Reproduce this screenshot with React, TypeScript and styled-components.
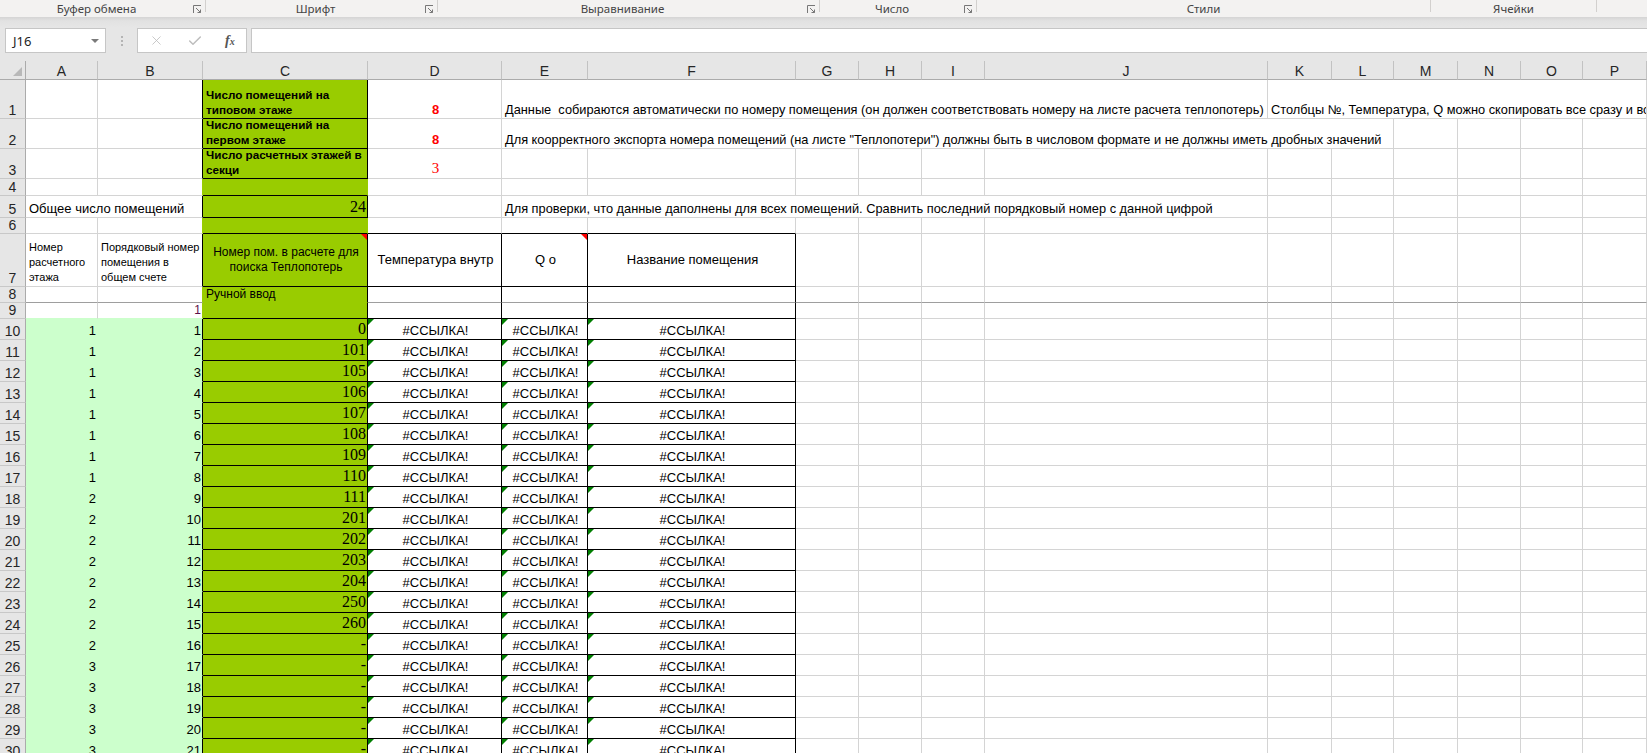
import React from 'react';
import styled, { createGlobalStyle } from 'styled-components';
import { X, Check } from 'lucide-react';

const GREEN = '#99cc00';
const LIGHT = '#ccffcc';
const GRID = '#d4d4d4';
const FREEZE = '#9e9e9e';

const sans = "'Liberation Sans', Arial, sans-serif";
const serif = "'Liberation Serif', 'Times New Roman', serif";
const ui = "'Noto Sans', 'Open Sans', sans-serif";

const GlobalStyle = createGlobalStyle`
  html, body {
    margin: 0;
    padding: 0;
    background: #fff;
    overflow: hidden;
  }
  body {
    font-family: ${sans};
  }
`;

const Window = styled.div`
  width: 1647px;
  height: 753px;
  display: flex;
  flex-direction: column;
  overflow: hidden;
  background: #e6e6e6;
`;

/* ---------- ribbon group captions ---------- */

const RibbonLabels = styled.div`
  display: flex;
  height: 17px;
  flex-shrink: 0;
  background: #f3f2f1;
`;

const RibbonGroup = styled.div<{ $w: number }>`
  width: ${p => p.$w}px;
  flex-shrink: 0;
  display: flex;
  align-items: center;
`;

const GroupLabel = styled.span`
  flex: 1;
  text-align: center;
  font-family: ${ui};
  font-size: 11.5px;
  color: #444;
  white-space: nowrap;
`;

const GroupSep = styled.span`
  align-self: flex-start;
  width: 1px;
  height: 12px;
  background: #d2d0ce;
`;

const LauncherIcon = styled.svg`
  width: 9px;
  height: 9px;
  margin-right: 3px;
  margin-top: 1px;
`;

const RibbonShade = styled.div`
  height: 11px;
  flex-shrink: 0;
  background: linear-gradient(#d4d4d4, #e2e2e2 4px, #e6e6e6);
`;

/* ---------- formula bar ---------- */

const FormulaBar = styled.div`
  display: flex;
  height: 25px;
  flex-shrink: 0;
  padding-left: 5px;
`;

const NameBox = styled.div`
  width: 101px;
  box-sizing: border-box;
  background: #fff;
  border: 1px solid #c6c6c6;
  display: flex;
  align-items: center;
  justify-content: space-between;
  padding: 0 6px 0 7px;
  font-family: ${ui};
  font-size: 13px;
  color: #222;
`;

const Caret = styled.span`
  width: 0;
  height: 0;
  border-left: 4px solid transparent;
  border-right: 4px solid transparent;
  border-top: 4px solid #7a7a7a;
`;

const Grip = styled.div`
  width: 31px;
  display: flex;
  flex-direction: column;
  align-items: center;
  justify-content: center;
  gap: 2px;
`;

const GripDot = styled.span`
  width: 2px;
  height: 2px;
  background: #b4b4b4;
`;

const FxBox = styled.div`
  width: 110px;
  box-sizing: border-box;
  background: #fff;
  border: 1px solid #c6c6c6;
  display: flex;
  align-items: center;
  justify-content: space-around;
  color: #bdbdbd;
`;

const Fx = styled.span`
  font-family: ${serif};
  font-style: italic;
  font-weight: 700;
  font-size: 14px;
  color: #555;
  small {
    font-size: 10px;
  }
`;

const FormulaInput = styled.div`
  flex: 1;
  margin-left: 4px;
  background: #fff;
  border: 1px solid #c6c6c6;
  border-right: none;
`;

const BarGap = styled.div`
  height: 8px;
  flex-shrink: 0;
`;

/* ---------- sheet ---------- */

const Sheet = styled.div<{ $cols: string; $rows: string }>`
  flex: 1;
  display: grid;
  grid-template-columns: ${p => p.$cols};
  grid-template-rows: ${p => p.$rows};
  background: #fff;
  overflow: hidden;
`;

const Corner = styled.div`
  background: #e6e6e6;
  border-right: 1px solid #ababab;
  border-bottom: 1px solid #ababab;
  display: flex;
  align-items: flex-end;
  justify-content: flex-end;
  padding: 0 3px 3px 0;
`;

const ColHeader = styled.div`
  background: #e6e6e6;
  border-right: 1px solid #c2c2c2;
  border-bottom: 1px solid #ababab;
  display: flex;
  align-items: center;
  justify-content: center;
  font-family: ${sans};
  font-size: 14px;
  color: #262626;
  padding-top: 2px;
`;

const RowHeader = styled.div`
  background: #e6e6e6;
  border-right: 1px solid #ababab;
  border-bottom: 1px solid #c8c8c8;
  display: flex;
  align-items: flex-end;
  justify-content: center;
  font-family: ${sans};
  font-size: 14px;
  line-height: 16px;
  color: #262626;
`;

type Align = 'left' | 'center' | 'right';

const Cell = styled.div<{
  $span: number;
  $fill: string;
  $rb: string;
  $bb: string;
  $align: Align;
  $middle: boolean;
  $serif: boolean;
  $size: number;
  $bold: boolean;
  $color: string;
  $wrap: boolean;
}>`
  position: relative;
  grid-column: span ${p => p.$span};
  min-width: 0;
  background: ${p => p.$fill};
  border-right: 1px solid ${p => p.$rb};
  border-bottom: 1px solid ${p => p.$bb};
  display: flex;
  flex-direction: column;
  justify-content: ${p => (p.$middle ? 'center' : 'flex-end')};
  text-align: ${p => p.$align};
  padding: ${p => (p.$wrap ? '0 1px 1px 3px' : '0 1px 1px 3px')};
  overflow: hidden;
  white-space: ${p => (p.$wrap ? 'normal' : 'pre')};
  font-family: ${p => (p.$serif ? serif : sans)};
  font-size: ${p => p.$size}px;
  line-height: ${p => (p.$wrap ? '15px' : 'normal')};
  font-weight: ${p => (p.$bold ? 700 : 400)};
  color: ${p => p.$color};
`;

const Flag = styled.span<{ $kind: 'comment' | 'error' }>`
  position: absolute;
  top: 0;
  width: 0;
  height: 0;
  ${p =>
    p.$kind === 'comment'
      ? 'right: 0; border-top: 6px solid #ff0000; border-left: 6px solid transparent;'
      : 'left: 0; border-top: 6px solid #007f00; border-right: 6px solid transparent;'}
`;

/* ---------- data ---------- */

type Spec = {
  text?: string;
  span?: number;
  fill?: string;
  boxed?: boolean;
  align?: Align;
  middle?: boolean;
  serif?: boolean;
  size?: number;
  bold?: boolean;
  color?: string;
  wrap?: boolean;
  flag?: 'comment' | 'error';
};

const COLS = ['A', 'B', 'C', 'D', 'E', 'F', 'G', 'H', 'I', 'J', 'K', 'L', 'M', 'N', 'O', 'P'];
const COL_W = [72, 105, 165, 134, 86, 208, 63, 63, 63, 283, 64, 62, 64, 63, 62, 64];
const ROW_H = [39, 30, 30, 17, 22, 16, 53, 16, 16, ...Array(21).fill(21)];

const ROOM_NO = ['0', '101', '105', '106', '107', '108', '109', '110', '111', '201', '202', '203', '204', '250', '260', '-', '-', '-', '-', '-', '-'];

const greenHead = (text: string): Spec => ({ text, fill: GREEN, boxed: true, bold: true, size: 11.7, wrap: true });
const redNum = (text: string, serifFont = false): Spec => ({
  text, align: 'center', color: '#ff0000', bold: !serifFont, serif: serifFont, size: serifFont ? 15 : 13,
});
const note = (text: string, span: number): Spec => ({ text, span, size: 12.8 });
const refErr: Spec = { text: '#ССЫЛКА!', boxed: true, align: 'center', size: 13, flag: 'error' };

const buildRows = (): Record<number, Spec>[] => {
  const rows: Record<number, Spec>[] = [
    {
      2: greenHead('Число помещений на типовом этаже'),
      3: redNum('8'),
      4: note('Данные  собираются автоматически по номеру помещения (он должен соответствовать номеру на листе расчета теплопотерь)', 6),
      10: note('Столбцы №, Температура, Q можно скопировать все сразу и вставить в лист', 6),
    },
    {
      2: greenHead('Число помещений на первом этаже'),
      3: redNum('8'),
      4: note('Для коорректного экспорта номера помещений (на листе "Теплопотери") должны быть в числовом формате и не должны иметь дробных значений', 8),
    },
    {
      2: greenHead('Число расчетных этажей в секци'),
      3: redNum('3', true),
    },
    { 2: { fill: GREEN } },
    {
      0: { text: 'Общее число помещений', span: 2, size: 13 },
      2: { text: '24', fill: GREEN, boxed: true, align: 'right', serif: true, size: 16 },
      4: note('Для проверки, что данные даполнены для всех помещений. Сравнить последний порядковый номер с данной цифрой', 6),
    },
    { 2: { fill: GREEN } },
    {
      0: { text: 'Номер расчетного этажа', wrap: true, size: 11 },
      1: { text: 'Порядковый номер помещения в общем счете', wrap: true, size: 11 },
      2: { text: 'Номер пом. в расчете для поиска Теплопотерь', fill: GREEN, boxed: true, wrap: true, size: 12, align: 'center', middle: true, flag: 'comment' },
      3: { text: 'Температура внутр', boxed: true, align: 'center', middle: true, size: 13 },
      4: { text: 'Q о', boxed: true, align: 'center', middle: true, size: 13, flag: 'comment' },
      5: { text: 'Название помещения', boxed: true, align: 'center', middle: true, size: 13 },
    },
    {
      2: { text: 'Ручной ввод', fill: GREEN, size: 12 },
      3: { boxed: true },
      4: { boxed: true },
      5: { boxed: true },
    },
    {
      1: { text: '1', align: 'right', size: 12, color: '#5c1048' },
      2: { fill: GREEN },
      3: { boxed: true },
      4: { boxed: true },
      5: { boxed: true },
    },
  ];
  ROOM_NO.forEach((no, i) => {
    const floor = i < 8 ? 1 : i < 16 ? 2 : 3;
    rows.push({
      0: { text: String(floor), fill: LIGHT, align: 'right', size: 13 },
      1: { text: String(i + 1), fill: LIGHT, align: 'right', size: 13 },
      2: { text: no, fill: GREEN, boxed: true, align: 'right', serif: true, size: 16 },
      3: refErr,
      4: refErr,
      5: refErr,
    });
  });
  return rows;
};

type Placed = { spec: Spec; col: number; span: number };

const layout = (rows: Record<number, Spec>[]) => {
  // map every grid slot to the spec that covers it
  const cover: Spec[][] = rows.map(row => {
    const line: Spec[] = [];
    for (let c = 0; c < COLS.length; c++) {
      const s = row[c] ?? {};
      const span = s.span ?? 1;
      for (let k = 0; k < span && c + k < COLS.length; k++) line[c + k] = s;
      c += span - 1;
    }
    return line;
  });

  const edge = (a: Spec, b?: Spec) => {
    if (a.boxed || b?.boxed) return '#000';
    if (a.fill) return a.fill;
    if (b?.fill) return b.fill;
    return GRID;
  };

  return rows.map((row, r) => {
    const placed: Placed[] = [];
    for (let c = 0; c < COLS.length; c++) {
      const spec = row[c] ?? {};
      const span = Math.min(spec.span ?? 1, COLS.length - c);
      placed.push({ spec, col: c, span });
      c += span - 1;
    }
    return placed.map(({ spec, col, span }) => {
      const right = edge(spec, cover[r][col + span]);
      let bottom = edge(spec, cover[r + 1]?.[col]);
      if (r === 7 && col !== 2) bottom = FREEZE;
      return { spec, col, span, right, bottom };
    });
  });
};

const Launcher = () => (
  <LauncherIcon viewBox="0 0 9 9">
    <path d="M0.5 8V0.5H8" fill="none" stroke="#777" strokeWidth="1" />
    <path d="M3 3L7.5 7.5M4.5 7.5H7.5V4.5" fill="none" stroke="#777" strokeWidth="1" />
  </LauncherIcon>
);

const GROUPS: { label: string; w: number; launcher: boolean }[] = [
  { label: 'Буфер обмена', w: 206, launcher: true },
  { label: 'Шрифт', w: 232, launcher: true },
  { label: 'Выравнивание', w: 382, launcher: true },
  { label: 'Число', w: 157, launcher: true },
  { label: 'Стили', w: 454, launcher: false },
  { label: 'Ячейки', w: 166, launcher: false },
  { label: '', w: 50, launcher: false },
];

const App: React.FC = () => {
  const grid = layout(buildRows());
  const cols = ['26px', ...COL_W.map(w => `${w}px`)].join(' ');
  const rowsTpl = ['19px', ...ROW_H.map(h => `${h}px`)].join(' ');

  return (
    <Window>
      <GlobalStyle />
      <RibbonLabels>
        {GROUPS.map((g, i) => (
          <RibbonGroup key={i} $w={g.w}>
            <GroupLabel>{g.label}</GroupLabel>
            {g.launcher && <Launcher />}
            {g.label && <GroupSep />}
          </RibbonGroup>
        ))}
      </RibbonLabels>
      <RibbonShade />

      <FormulaBar>
        <NameBox>
          J16
          <Caret />
        </NameBox>
        <Grip>
          <GripDot />
          <GripDot />
          <GripDot />
        </Grip>
        <FxBox>
          <X size={15} strokeWidth={1.3} />
          <Check size={16} strokeWidth={2.2} />
          <Fx>
            f<small>x</small>
          </Fx>
        </FxBox>
        <FormulaInput />
      </FormulaBar>
      <BarGap />

      <Sheet $cols={cols} $rows={rowsTpl}>
        <Corner>
          <svg width="9" height="9" viewBox="0 0 9 9">
            <path d="M9 0V9H0Z" fill="#b8b8b8" />
          </svg>
        </Corner>
        {COLS.map(c => (
          <ColHeader key={c}>{c}</ColHeader>
        ))}
        {grid.map((cells, r) => (
          <React.Fragment key={r}>
            <RowHeader>{r + 1}</RowHeader>
            {cells.map(({ spec, col, span, right, bottom }) => (
              <Cell
                key={col}
                $span={span}
                $fill={spec.fill ?? '#fff'}
                $rb={right}
                $bb={bottom}
                $align={spec.align ?? 'left'}
                $middle={!!spec.middle}
                $serif={!!spec.serif}
                $size={spec.size ?? 13}
                $bold={!!spec.bold}
                $color={spec.color ?? '#000'}
                $wrap={!!spec.wrap}
              >
                {spec.text}
                {spec.flag && <Flag $kind={spec.flag} />}
              </Cell>
            ))}
          </React.Fragment>
        ))}
      </Sheet>
    </Window>
  );
};

export default App;
